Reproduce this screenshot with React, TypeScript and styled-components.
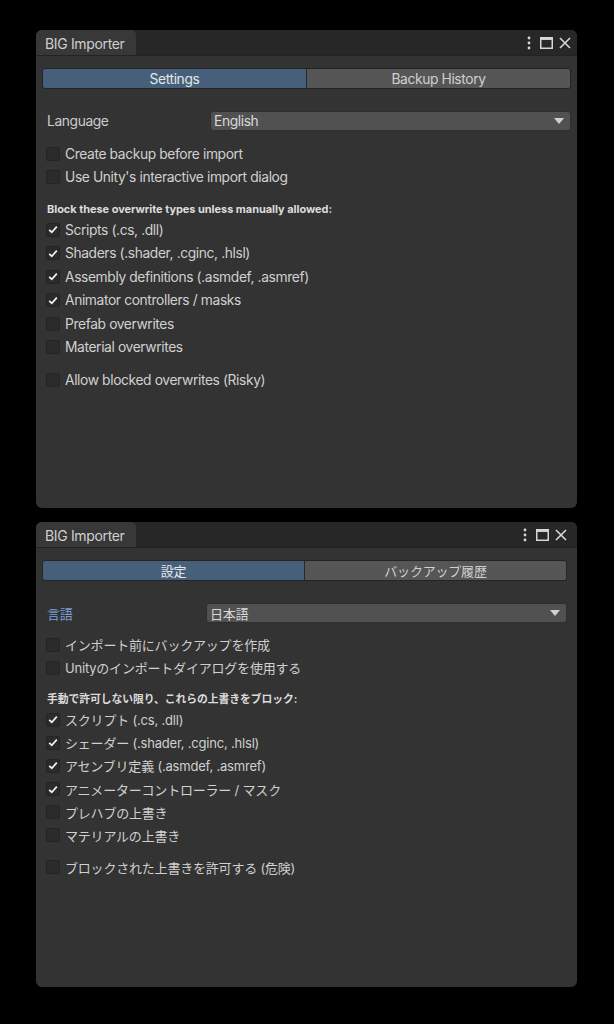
import React from 'react';
import styled, { createGlobalStyle } from 'styled-components';

const GlobalStyle = createGlobalStyle`
  html, body {
    margin: 0;
    padding: 0;
    background: #000000;
  }
  body {
    font-family: Inter, "Noto Sans CJK JP", sans-serif;
    -webkit-font-smoothing: antialiased;
  }
`;

const Page = styled.div`
  width: 614px;
  height: 1024px;
  box-sizing: border-box;
  padding: 30px 37px 0 36px;
  display: flex;
  flex-direction: column;
  gap: 14px;
`;

const Window = styled.div<{ $height: number; $cjk?: boolean }>`
  height: ${(p) => p.$height}px;
  display: flex;
  flex-direction: column;
  border-radius: 6px;
  overflow: hidden;
  background: #333333;
  --text-size: ${(p) => (p.$cjk ? '13px' : '13.8px')};
  --text-spacing: ${(p) => (p.$cjk ? '-0.2px' : '-0.38px')};
  --header-size: ${(p) => (p.$cjk ? '10.8px' : '11px')};
  --row-height: ${(p) => (p.$cjk ? '23.1px' : '23.5px')};
  --header-gap: ${(p) => (p.$cjk ? '11px' : '12px')};
`;

const TitleBar = styled.div`
  height: 25px;
  flex-shrink: 0;
  background: #272727;
  display: flex;
  align-items: stretch;
  justify-content: space-between;
  border-bottom: 1px solid #232323;
`;

const TitleTab = styled.div`
  width: 100px;
  box-sizing: border-box;
  padding: 2px 0 0 9px;
  background: #383838;
  border-radius: 5px 5px 0 0;
  display: flex;
  align-items: center;
  color: #cfcfcf;
  font-size: 14px;
  letter-spacing: -0.35px;
`;

const TitleIcons = styled.div<{ $right: number }>`
  display: flex;
  align-items: center;
  gap: 6px;
  padding-right: ${(p) => p.$right}px;
  color: #d6d6d6;
  & > svg:first-child {
    margin-right: 2px;
  }
`;

const Body = styled.div<{ $right: number }>`
  flex: 1;
  padding: 12px ${(p) => p.$right}px 0 6px;
  display: flex;
  flex-direction: column;
`;

const Toolbar = styled.div`
  height: 19px;
  display: flex;
  border: 1px solid #242424;
  border-radius: 3px;
  overflow: hidden;
`;

const ToolbarButton = styled.div<{ $active?: boolean }>`
  flex: 1;
  display: flex;
  align-items: center;
  justify-content: center;
  background: ${(p) => (p.$active ? '#46607c' : '#565656')};
  color: ${(p) => (p.$active ? '#e6e6e6' : '#d0d0d0')};
  font-size: var(--text-size);
  letter-spacing: var(--text-spacing);
  & + & {
    border-left: 1px solid #2a2a2a;
  }
`;

const FieldRow = styled.div<{ $labelWidth: number }>`
  margin-top: 22px;
  padding-left: 5px;
  height: 20px;
  display: grid;
  grid-template-columns: ${(p) => p.$labelWidth}px 1fr;
  align-items: center;
`;

const FieldLabel = styled.div<{ $focused?: boolean }>`
  color: ${(p) => (p.$focused ? '#7a9fd6' : '#cccccc')};
  font-size: var(--text-size);
  letter-spacing: var(--text-spacing);
`;

const Dropdown = styled.div`
  height: 20px;
  box-sizing: border-box;
  background: #515151;
  border: 1px solid #2e2e2e;
  border-radius: 3px;
  padding: 0 6px 0 3px;
  display: flex;
  align-items: center;
  justify-content: space-between;
  color: #dadada;
  font-size: var(--text-size);
  letter-spacing: var(--text-spacing);
`;

const Arrow = styled.span`
  width: 0;
  height: 0;
  border-left: 5px solid transparent;
  border-right: 5px solid transparent;
  border-top: 6px solid #d0d0d0;
`;

const Group = styled.div<{ $gap: number }>`
  margin-top: ${(p) => p.$gap}px;
  display: flex;
  flex-direction: column;
`;

const CheckRow = styled.label`
  height: var(--row-height);
  padding-left: 4px;
  display: flex;
  align-items: center;
  gap: 5px;
  color: #d0d0d0;
  font-size: var(--text-size);
  letter-spacing: var(--text-spacing);
  white-space: nowrap;
`;

const Box = styled.span`
  width: 14px;
  height: 14px;
  box-sizing: border-box;
  border-radius: 2px;
  background: #2b2b2b;
  border: 1px solid #242424;
  display: flex;
  align-items: center;
  justify-content: center;
  flex-shrink: 0;
`;

const SectionHeader = styled.div`
  margin-top: var(--header-gap);
  height: 16px;
  padding-left: 5px;
  display: flex;
  align-items: center;
  color: #dcdcdc;
  font-size: var(--header-size);
  font-weight: 700;
  letter-spacing: -0.05px;
  white-space: nowrap;
`;

const Kebab = () => (
  <svg width="6" height="14" viewBox="0 0 6 14">
    <circle cx="3" cy="2" r="1.4" fill="currentColor" />
    <circle cx="3" cy="7" r="1.4" fill="currentColor" />
    <circle cx="3" cy="12" r="1.4" fill="currentColor" />
  </svg>
);

const Maximize = () => (
  <svg width="13" height="12" viewBox="0 0 13 12">
    <rect x="0.75" y="0.75" width="11.5" height="10.5" fill="none" stroke="currentColor" strokeWidth="1.5" />
    <rect x="0.75" y="0.75" width="11.5" height="2.2" fill="currentColor" />
  </svg>
);

const Close = () => (
  <svg width="12" height="12" viewBox="0 0 12 12">
    <path d="M1 1 L11 11 M11 1 L1 11" stroke="currentColor" strokeWidth="1.6" />
  </svg>
);

const Check = () => (
  <svg width="10" height="9" viewBox="0 0 10 9">
    <path d="M1.2 4.8 L3.8 7.2 L8.8 1.6" fill="none" stroke="#f2f2f2" strokeWidth="1.7" />
  </svg>
);

const CheckItem: React.FC<{ label: string; checked?: boolean }> = ({ label, checked }) => (
  <CheckRow>
    <Box>{checked && <Check />}</Box>
    {label}
  </CheckRow>
);

interface Texts {
  settings: string;
  history: string;
  language: string;
  languageValue: string;
  createBackup: string;
  interactive: string;
  header: string;
  blocked: string[];
  unchecked: string[];
  allow: string;
}

const english: Texts = {
  settings: 'Settings',
  history: 'Backup History',
  language: 'Language',
  languageValue: 'English',
  createBackup: 'Create backup before import',
  interactive: "Use Unity's interactive import dialog",
  header: 'Block these overwrite types unless manually allowed:',
  blocked: [
    'Scripts (.cs, .dll)',
    'Shaders (.shader, .cginc, .hlsl)',
    'Assembly definitions (.asmdef, .asmref)',
    'Animator controllers / masks',
  ],
  unchecked: ['Prefab overwrites', 'Material overwrites'],
  allow: 'Allow blocked overwrites (Risky)',
};

const japanese: Texts = {
  settings: '設定',
  history: 'バックアップ履歴',
  language: '言語',
  languageValue: '日本語',
  createBackup: 'インポート前にバックアップを作成',
  interactive: 'Unityのインポートダイアログを使用する',
  header: '手動で許可しない限り、これらの上書きをブロック:',
  blocked: [
    'スクリプト (.cs, .dll)',
    'シェーダー (.shader, .cginc, .hlsl)',
    'アセンブリ定義 (.asmdef, .asmref)',
    'アニメーターコントローラー / マスク',
  ],
  unchecked: ['プレハブの上書き', 'マテリアルの上書き'],
  allow: 'ブロックされた上書きを許可する (危険)',
};

interface ImporterWindowProps {
  texts: Texts;
  height: number;
  inset: number;
  cjk?: boolean;
  labelFocused?: boolean;
}

const ImporterWindow: React.FC<ImporterWindowProps> = ({ texts, height, inset, cjk, labelFocused }) => (
  <Window $height={height} $cjk={cjk}>
    <TitleBar>
      <TitleTab>BIG Importer</TitleTab>
      <TitleIcons $right={6 + inset}>
        <Kebab />
        <Maximize />
        <Close />
      </TitleIcons>
    </TitleBar>
    <Body $right={6 + inset}>
      <Toolbar>
        <ToolbarButton $active>{texts.settings}</ToolbarButton>
        <ToolbarButton>{texts.history}</ToolbarButton>
      </Toolbar>
      <FieldRow $labelWidth={163 - inset}>
        <FieldLabel $focused={labelFocused}>{texts.language}</FieldLabel>
        <Dropdown>
          {texts.languageValue}
          <Arrow />
        </Dropdown>
      </FieldRow>
      <Group $gap={cjk ? 10 : 11}>
        <CheckItem label={texts.createBackup} />
        <CheckItem label={texts.interactive} />
      </Group>
      <SectionHeader>{texts.header}</SectionHeader>
      <Group $gap={cjk ? 2 : 1}>
        {texts.blocked.map((b) => (
          <CheckItem key={b} label={b} checked />
        ))}
        {texts.unchecked.map((u) => (
          <CheckItem key={u} label={u} />
        ))}
      </Group>
      <Group $gap={9}>
        <CheckItem label={texts.allow} />
      </Group>
    </Body>
  </Window>
);

const App: React.FC = () => (
  <>
    <GlobalStyle />
    <Page>
      <ImporterWindow texts={english} height={478} inset={0} />
      <ImporterWindow texts={japanese} height={465} inset={4} cjk labelFocused />
    </Page>
  </>
);

export default App;
